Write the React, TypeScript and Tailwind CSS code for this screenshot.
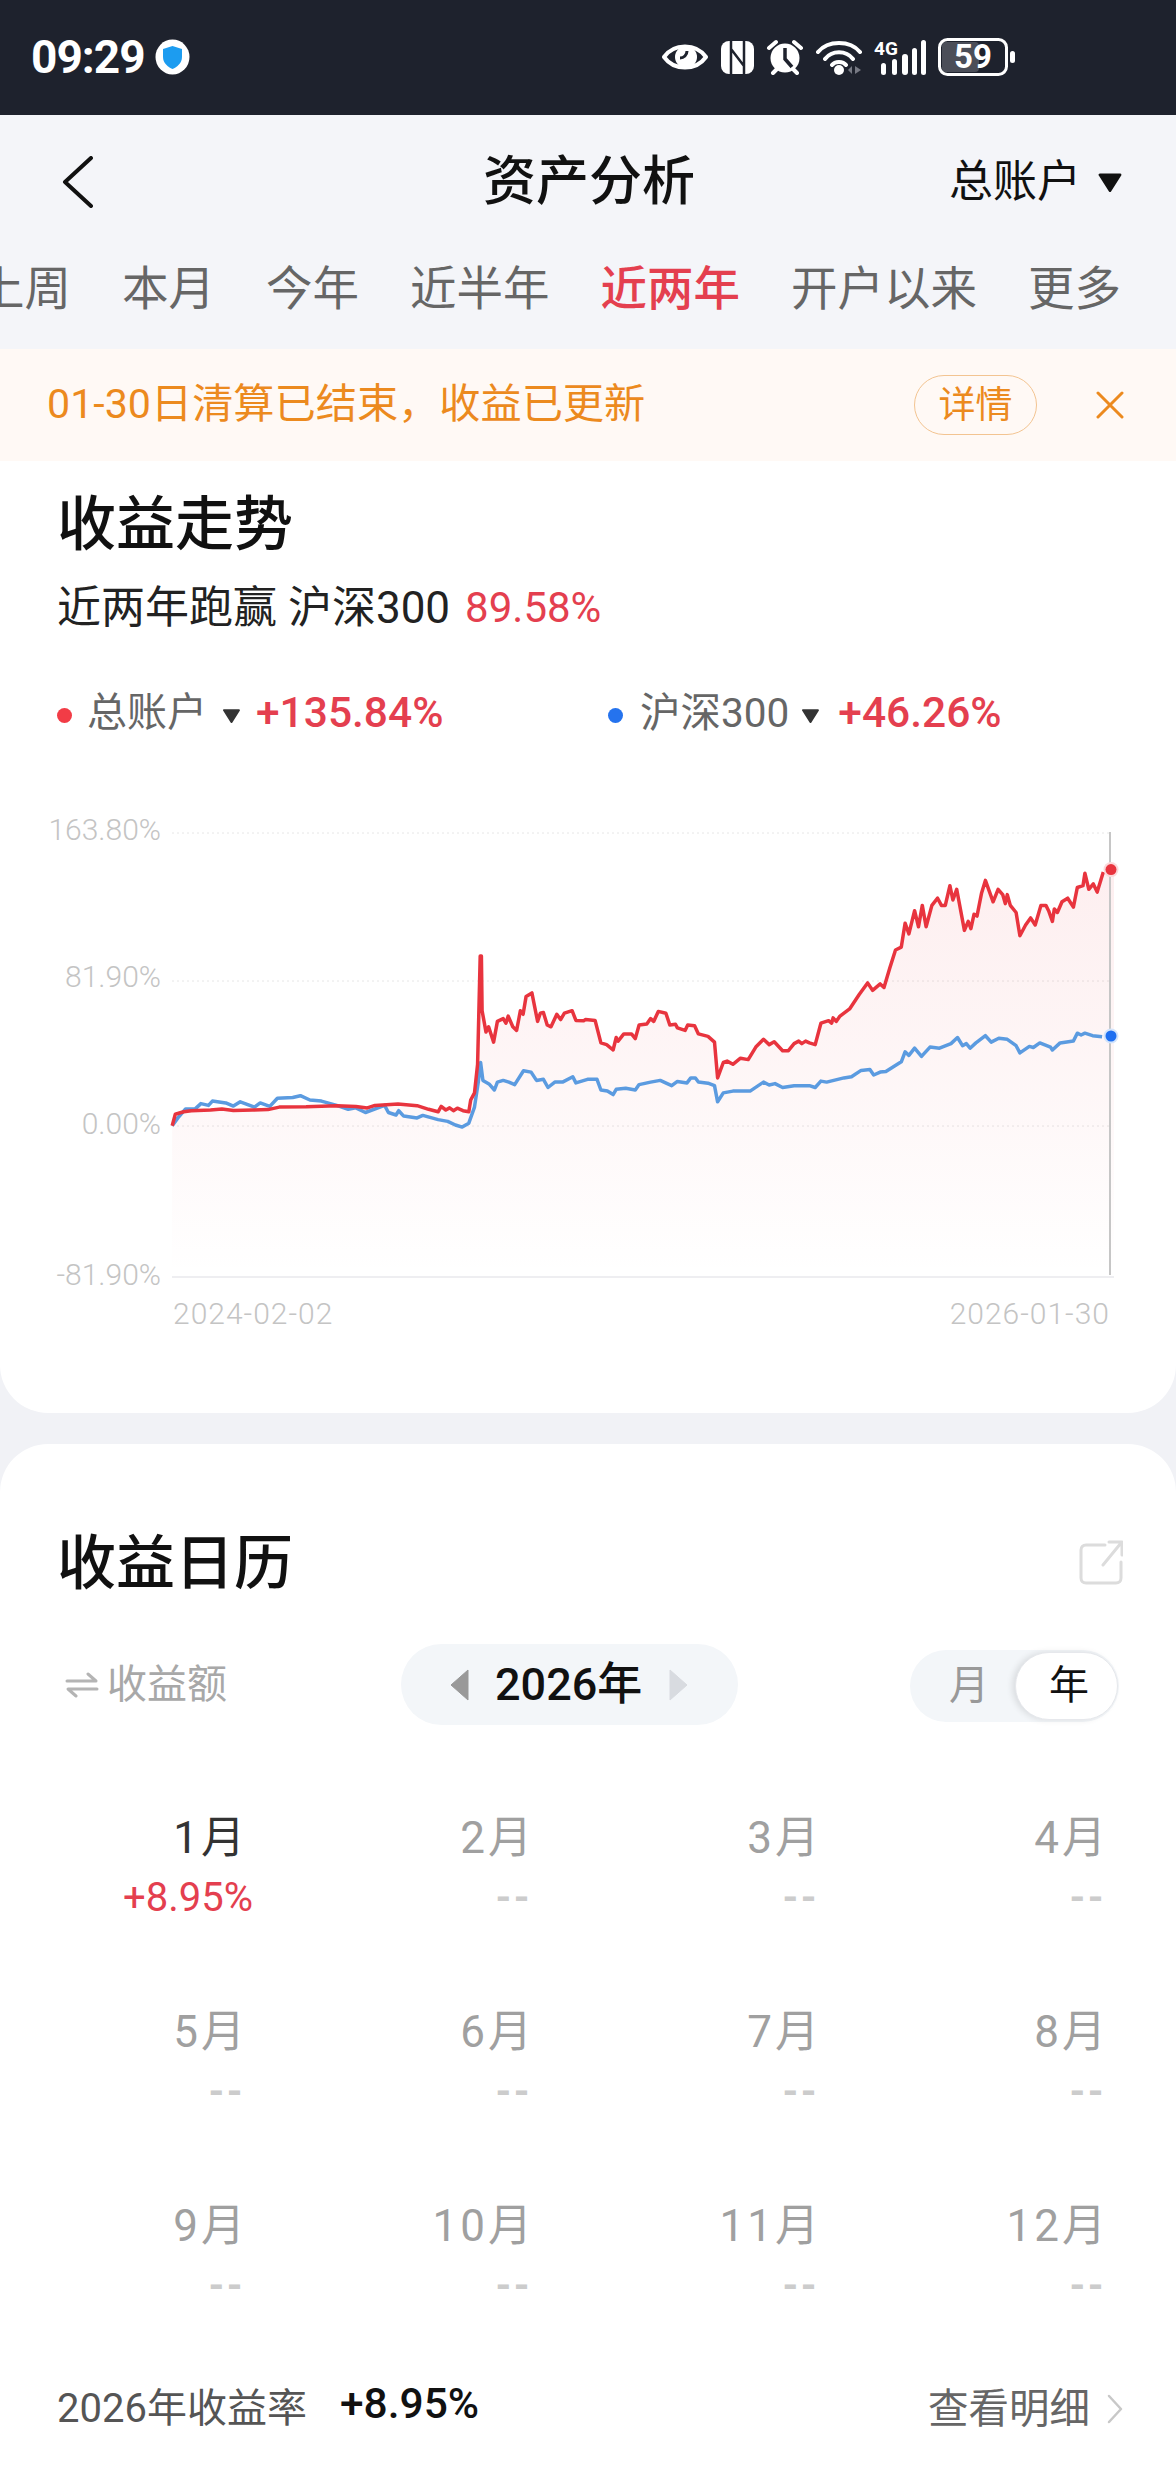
const sx = 600 / 1568;
const sy = 560 / 1568;
const L = (a: number[]) => { const o: number[][] = []; for (let i = 0; i < a.length; i += 2) o.push([a[i] * sx, 800 + a[i + 1] * sy]); return o; };
const R = (a: number[]) => { const o: number[][] = []; for (let i = 0; i < a.length; i += 2) o.push([576 + a[i] * sx, 800 + a[i + 1] * sy]); return o; };

const red = [
  ...L([450,912,458,880,480,873,500,870,550,868,580,865,610,869,660,868,700,867,730,860,800,859,880,856,930,858,960,862,980,855,1040,851,1090,856,1120,866,1145,873,1153,858,1165,868,1175,862,1185,870,1195,863,1210,870,1225,873,1230,840,1240,820,1248,740,1255,437,1258,437,1260,590,1270,650,1277,635,1290,678,1300,620,1315,612,1322,625,1328,605,1340,635,1350,645,1360,590,1367,600,1375,550,1390,540,1405,620,1412,597,1420,595,1430,630,1440,635,1455,600,1465,615,1475,597,1495,590,1505,617]),
  ...R([20,618,25,615,50,617,65,680,80,685,97,700,105,665,110,675,125,655,145,655,155,668,165,630,185,627,195,612,203,620,215,592,235,597,245,630,260,628,265,638,285,645,292,630,310,632,320,655,345,662,362,678,370,778,385,735,395,731,410,740,430,723,450,727,470,692,490,670,505,685,518,677,540,702,555,702,570,682,582,675,590,682,600,675,610,680,625,685,640,625,660,618,668,625,672,610,680,620,690,605,715,585,740,545,762,512,775,533,795,515,805,525,820,470,835,420,850,412,860,345,870,375,885,310,895,355,905,295,915,355,930,295,945,275,955,295,965,295,977,240,985,280,995,250,1015,365,1025,340,1032,360,1040,320,1048,325,1060,260,1070,225,1090,285,1103,250,1115,265,1122,290,1127,265,1135,295,1150,315,1160,380,1175,350,1188,330,1200,350,1215,295,1228,295,1235,310,1245,340,1250,305,1258,315,1270,285,1285,275,1300,300,1310,245,1325,240,1330,205,1340,250,1352,235,1362,258,1378,202]),
];
const blue = [
  ...L([450,912,465,890,485,865,510,865,525,850,545,855,555,843,590,848,610,857,628,845,665,860,680,848,705,858,725,835,765,833,785,828,810,840,840,843,880,855,910,866,930,862,955,875,1005,855,1015,875,1035,882,1042,870,1055,885,1090,890,1105,883,1145,895,1170,900,1190,910,1208,916,1225,905,1240,860,1250,790,1256,735,1262,785,1278,795,1292,812,1300,790,1315,785,1330,790,1345,797,1368,758,1388,762,1402,785,1420,782,1432,805,1450,790,1470,790,1497,775,1505,792]),
  ...R([30,782,55,782,65,812,82,815,97,825,105,810,130,807,155,812,165,797,195,790,220,785,240,795,250,800,265,788,290,792,300,778,312,778,320,790,345,793,362,800,370,845,385,820,410,815,455,815,490,790,505,798,520,794,540,805,570,800,610,800,625,805,640,787,655,790,700,778,720,775,745,757,768,755,778,770,795,762,810,760,850,733,860,705,870,715,885,695,903,718,925,692,950,695,980,682,997,665,1010,688,1020,682,1030,695,1045,680,1070,660,1085,678,1105,667,1127,670,1150,688,1160,708,1185,690,1195,693,1212,680,1240,692,1245,700,1265,680,1300,675,1310,653,1320,658,1330,653,1350,660,1375,663]),
];
const toPath = (p: number[][]) => p.map((q, i) => `${i ? "L" : "M"}${q[0].toFixed(1)} ${q[1].toFixed(1)}`).join("");
const areaPath = `${toPath(red)}L1111 870L1114 870L1114 1276L172 1276Z`;

function Caret({ className }: { className: string }) {
  return (
    <svg viewBox="0 0 18 14" className={className}>
      <path d="M2 2H16L9 13Z" fill="currentColor" stroke="currentColor" strokeWidth="2" strokeLinejoin="round" />
    </svg>
  );
}

function StatusIcons() {
  return (
    <div className="flex items-center h-[40px] ml-auto mr-[161px]">
      <svg width="46" height="34" viewBox="0 0 46 34" className="mr-[13px]">
        <path d="M2 17C12 3 34 3 44 17C34 31 12 31 2 17Z" fill="none" stroke="#fff" strokeWidth="4" strokeLinejoin="round" />
        <circle cx="24" cy="17" r="11" fill="#fff" />
        <path d="M25 11a7 7 0 0 1-7 7" fill="none" stroke="#1e222d" strokeWidth="3" />
      </svg>
      <svg width="33" height="34" viewBox="0 0 33 34" className="mr-[12px]">
        <rect x="0" y="1" width="33" height="33" rx="8" fill="#fff" />
        <path d="M10 1V34M23 1V34M10 9L23 26" fill="none" stroke="#1e222d" strokeWidth="2.5" />
      </svg>
      <svg width="38" height="36" viewBox="0 0 38 36" className="mr-[12px]">
        <circle cx="19" cy="19" r="14.5" fill="#fff" />
        <path d="M19 9V20L26 28" fill="none" stroke="#1e222d" strokeWidth="3.5" />
        <path d="M3 9L10 3M35 9L28 3M7 34L11 30M31 34L27 30" stroke="#fff" strokeWidth="4" strokeLinecap="round" />
      </svg>
      <svg width="46" height="36" viewBox="0 0 46 36" className="mr-[12px]">
        <path d="M2 13C12 1 34 1 44 13M9 20C16 11 30 11 37 20M16 26C19 22 27 22 30 26" fill="none" stroke="#fff" strokeWidth="4" strokeLinecap="round" />
        <circle cx="23" cy="31" r="5" fill="#fff" />
        <path d="M32 31L36 27V35ZM39 27L45 31L39 35Z" fill="#777a84" />
      </svg>
      <svg width="52" height="36" viewBox="0 0 52 36" className="mr-[12px] overflow-visible">
        <text x="0" y="16" fontSize="19" fontWeight="700" fill="#fff" fontFamily="Roboto, sans-serif">4G</text>
        <rect x="7" y="24" width="5" height="12" rx="2.5" fill="#fff" />
        <rect x="18" y="20" width="5" height="16" rx="2.5" fill="#fff" />
        <rect x="28" y="15" width="6" height="21" rx="3" fill="#fff" />
        <rect x="38" y="9" width="5" height="27" rx="2.5" fill="#fff" />
        <rect x="47" y="1" width="5" height="35" rx="2.5" fill="#fff" />
      </svg>
      <svg width="77" height="38" viewBox="0 0 77 38">
        <rect x="4" y="4" width="37" height="30" fill="#4b4e58" rx="4" />
        <rect x="1.5" y="1.5" width="67" height="35" rx="8" fill="none" stroke="#fff" strokeWidth="3" />
        <text x="35" y="30" fontSize="33" fontWeight="700" textAnchor="middle" fill="#fff" fontFamily="Roboto, sans-serif">59</text>
        <rect x="72" y="13" width="5" height="12" rx="2.5" fill="#fff" />
      </svg>
    </div>
  );
}

const months = ["1月", "2月", "3月", "4月", "5月", "6月", "7月", "8月", "9月", "10月", "11月", "12月"];
const tabs = ["上周", "本月", "今年", "近半年", "近两年", "开户以来", "更多"];

function Chart() {
  const grid = [833, 981, 1126];
  const labels: [string, number][] = [["163.80%", 840], ["81.90%", 987], ["0.00%", 1134], ["-81.90%", 1285]];
  return (
    <svg width="1176" height="540" viewBox="0 800 1176 540" className="block" fontFamily="Roboto, sans-serif">
      <defs>
        <linearGradient id="area" x1="0" y1="0" x2="0" y2="1">
          <stop offset="0" stopColor="#e8343e" stopOpacity="0.08" />
          <stop offset="0.55" stopColor="#e8343e" stopOpacity="0.04" />
          <stop offset="1" stopColor="#e8343e" stopOpacity="0" />
        </linearGradient>
      </defs>
      {grid.map((y) => (
        <line key={y} x1="172" x2="1110" y1={y} y2={y} stroke="#e6e6e6" strokeWidth="1" strokeDasharray="2 3" />
      ))}
      <line x1="172" x2="1114" y1="1277" y2="1277" stroke="#e8e9ec" strokeWidth="1.5" />
      {labels.map(([t, y]) => (
        <text key={t} x="161" y={y} textAnchor="end" fontSize="30" fontWeight="300" fill="#c4c4c4">{t}</text>
      ))}
      <text x="173" y="1324" fontSize="30" fontWeight="300" letterSpacing="1" fill="#c4c4c4">2024-02-02</text>
      <text x="1110" y="1324" textAnchor="end" fontSize="30" fontWeight="300" letterSpacing="1" fill="#c4c4c4">2026-01-30</text>
      <path d={areaPath} fill="url(#area)" />
      <path d={toPath(blue)} fill="none" stroke="#5b9be0" strokeWidth="3.5" strokeLinejoin="round" />
      <path d={toPath(red)} fill="none" stroke="#e8343e" strokeWidth="3.5" strokeLinejoin="round" />
      <line x1="1110" x2="1110" y1="832" y2="1275" stroke="#c6c6c6" strokeWidth="2" />
      <circle cx="1111" cy="869.6" r="7.5" fill="#fbd9db" />
      <circle cx="1111" cy="869.6" r="5.5" fill="#e8343e" />
      <circle cx="1111" cy="1036" r="7.5" fill="#d3e4fb" />
      <circle cx="1111" cy="1036" r="5.5" fill="#1f6ff0" />
    </svg>
  );
}

export default function App() {
  return (
    <div className="w-[1176px] h-[2480px] overflow-hidden bg-[#f1f2f6] [font-family:Roboto,'Noto_Sans_CJK_SC',sans-serif]">
      <div className="h-[115px] bg-[#1e222d] flex items-center pl-[31px] pb-[1px]">
        <span className="text-[46px] leading-none font-bold text-white tracking-[-1px]">09:29</span>
        <svg width="35" height="36" viewBox="0 0 35 36" className="ml-[10px]">
          <ellipse cx="17.5" cy="18" rx="17" ry="17.5" fill="#fff" />
          <path d="M17.5 7L27 10V18C27 24 22 28 17.5 30C13 28 8 24 8 18V10Z" fill="#1c9cf0" />
        </svg>
        <StatusIcons />
      </div>

      <div className="h-[234px] bg-[#f4f5f9]">
        <div className="h-[130px] flex items-center relative pl-[62px] pr-[53px] pt-[4px]">
          <svg width="32" height="52" viewBox="0 0 32 52">
            <path d="M29 2L3 26L29 50" fill="none" stroke="#111" strokeWidth="4" strokeLinecap="round" strokeLinejoin="round" />
          </svg>
          <span className="absolute left-[483px] w-[212px] text-center text-[53px] leading-none font-medium text-[#111]">资产分析</span>
          <div className="ml-auto flex items-center gap-[16px] text-[#111]">
            <span className="text-[44px] leading-none">总账户</span>
            <Caret className="w-[26px] h-[20px] text-[#111]" />
          </div>
        </div>
        <div className="h-[86px] pt-[2px] flex items-center gap-[51px] ml-[-22px] text-[46.5px] leading-none text-[#666] whitespace-nowrap">
          {tabs.map((t) => (
            <span key={t} className={t === "近两年" ? "text-[#e43f4f] font-medium" : ""}>{t}</span>
          ))}
        </div>
      </div>

      <div className="h-[112px] bg-[#fff9f5] flex items-center pl-[47px] pr-[52px]">
        <span className="text-[41.2px] leading-none text-[#ec8a1e]">01-30日清算已结束，收益已更新</span>
        <span className="ml-auto w-[123px] h-[60px] rounded-full border border-[#f3c491] flex items-center justify-center text-[37px] leading-none text-[#ec8a1e]">详情</span>
        <svg width="28" height="28" viewBox="0 0 28 28" className="ml-[59px]">
          <path d="M2 2L26 26M26 2L2 26" stroke="#ec8a1e" strokeWidth="3" strokeLinecap="round" />
        </svg>
      </div>

      <div className="h-[952px] bg-white rounded-b-[48px] pt-[29px]">
        <div className="px-[57px]">
          <div className="h-[60px] pt-[8px] flex items-center text-[59px] leading-none font-medium text-[#111]">收益走势</div>
          <div className="h-[50px] mt-[32px] pt-[2px] flex items-center text-[44px] leading-none text-[#222] whitespace-pre">
            近两年跑赢 沪深300<span className="ml-[15px] text-[42px] text-[#e43f4f]">89.58%</span>
          </div>
          <div className="h-[50px] mt-[56px] flex items-center">
            <div className="w-[551px] flex items-center">
              <span className="w-[15px] h-[15px] rounded-full bg-[#f23c46] mt-[4px]" />
              <span className="ml-[15px] text-[40px] leading-none text-[#666]">总账户</span>
              <Caret className="ml-[15px] w-[19px] h-[15px] text-[#333] mt-[4px]" />
              <span className="ml-[15px] text-[42.5px] leading-none font-medium text-[#e43f4f]">+135.84%</span>
            </div>
            <div className="flex items-center">
              <span className="w-[15px] h-[15px] rounded-full bg-[#2573ee] mt-[4px]" />
              <span className="ml-[17px] text-[40.5px] leading-none text-[#666]">沪深300</span>
              <Caret className="ml-[12px] w-[19px] h-[15px] text-[#333] mt-[4px]" />
              <span className="ml-[18px] text-[42.5px] leading-none font-medium text-[#e43f4f]">+46.26%</span>
            </div>
          </div>
        </div>
        <div className="mt-[62px]">
          <Chart />
        </div>
      </div>

      <div className="mt-[31px] h-[1036px] bg-white rounded-t-[48px] pt-[86px]">
        <div className="h-[60px] pl-[57px] pr-[53px] pt-[6px] flex items-center justify-between">
          <span className="text-[59px] leading-none font-medium text-[#111]">收益日历</span>
          <svg width="44" height="46" viewBox="0 0 44 46">
            <path d="M26 5H7C4 5 2 7 2 10V38C2 41 4 43 7 43H37C40 43 42 41 42 38V22" fill="none" stroke="#dcdcdc" strokeWidth="3" strokeLinecap="round" />
            <path d="M24 25L42 3M30 2H43V15" fill="none" stroke="#dcdcdc" strokeWidth="3" strokeLinecap="round" strokeLinejoin="round" />
          </svg>
        </div>
        <div className="mt-[54px] h-[81px] pl-[58px] pr-[57px] flex items-center">
          <div className="w-[343px] flex items-center pl-[7px] text-[#a8a8a8]">
            <svg width="34" height="26" viewBox="0 0 34 26">
              <path d="M2 9H31L23 2M32 17H3L11 24" fill="none" stroke="#b4b4b4" strokeWidth="3" strokeLinecap="round" strokeLinejoin="round" />
            </svg>
            <span className="ml-[8px] text-[40px] leading-none">收益额</span>
          </div>
          <div className="w-[337px] h-[81px] rounded-full bg-[#f3f6f9] flex items-center pl-[48px]">
            <svg width="20" height="32" viewBox="0 0 20 32">
              <path d="M19 1V31L2 16Z" fill="#999" stroke="#999" strokeWidth="1" strokeLinejoin="round" />
            </svg>
            <span className="ml-[26px] w-[148px] text-[45px] leading-none font-medium text-[#111] whitespace-nowrap">2026年</span>
            <svg width="20" height="32" viewBox="0 0 20 32" className="ml-[26px]">
              <path d="M1 1V31L18 16Z" fill="#d8dbe0" stroke="#d8dbe0" strokeWidth="1" strokeLinejoin="round" />
            </svg>
          </div>
          <div className="ml-auto mt-[2px] w-[209px] h-[72px] rounded-full bg-[#f3f6f9] flex items-center justify-between pl-[39px] pr-[1px]">
            <span className="text-[40px] leading-none text-[#999]">月</span>
            <span className="w-[103px] h-[68px] pl-[5px] rounded-full bg-white shadow-[-3px_0_6px_rgba(0,0,0,0.1)] border border-[#e6e8ec] flex items-center justify-center text-[40px] leading-none text-[#111]">年</span>
          </div>
        </div>

        <div className="mt-[88px] grid grid-cols-[245px_287px_287px_287px] gap-y-[84px]">
          {months.map((m, i) => (
            <div key={m} className="h-[110px] text-right">
              <div className={`h-[50px] mr-[-3px] flex items-center justify-end text-[44px] leading-none tracking-[3px] ${i === 0 ? "text-[#333]" : "text-[#a0a0a0]"}`}>{m}</div>
              {i === 0 ? (
                <div className="h-[40px] mt-[15px] mr-[-8px] flex items-center justify-end text-[40px] leading-none text-[#e43f4f]">+8.95%</div>
              ) : (
                <div className="h-[40px] mt-[15px] flex items-center justify-end text-[40px] leading-none font-bold text-[#cccccc] tracking-[2.5px]">--</div>
              )}
            </div>
          ))}
        </div>

        <div className="mt-[73px] h-[50px] pl-[57px] pr-[53px] flex items-center">
          <span className="text-[40px] leading-none text-[#555]">2026年收益率</span>
          <span className="ml-[33px] mt-[-10px] text-[42.5px] leading-none font-medium text-[#111]">+8.95%</span>
          <span className="ml-auto text-[40.5px] leading-none text-[#666]">查看明细</span>
          <svg width="16" height="30" viewBox="0 0 16 30" className="ml-[17px]">
            <path d="M2 2L14 15L2 28" fill="none" stroke="#c8c8c8" strokeWidth="2.5" strokeLinecap="round" strokeLinejoin="round" />
          </svg>
        </div>
      </div>
    </div>
  );
}
